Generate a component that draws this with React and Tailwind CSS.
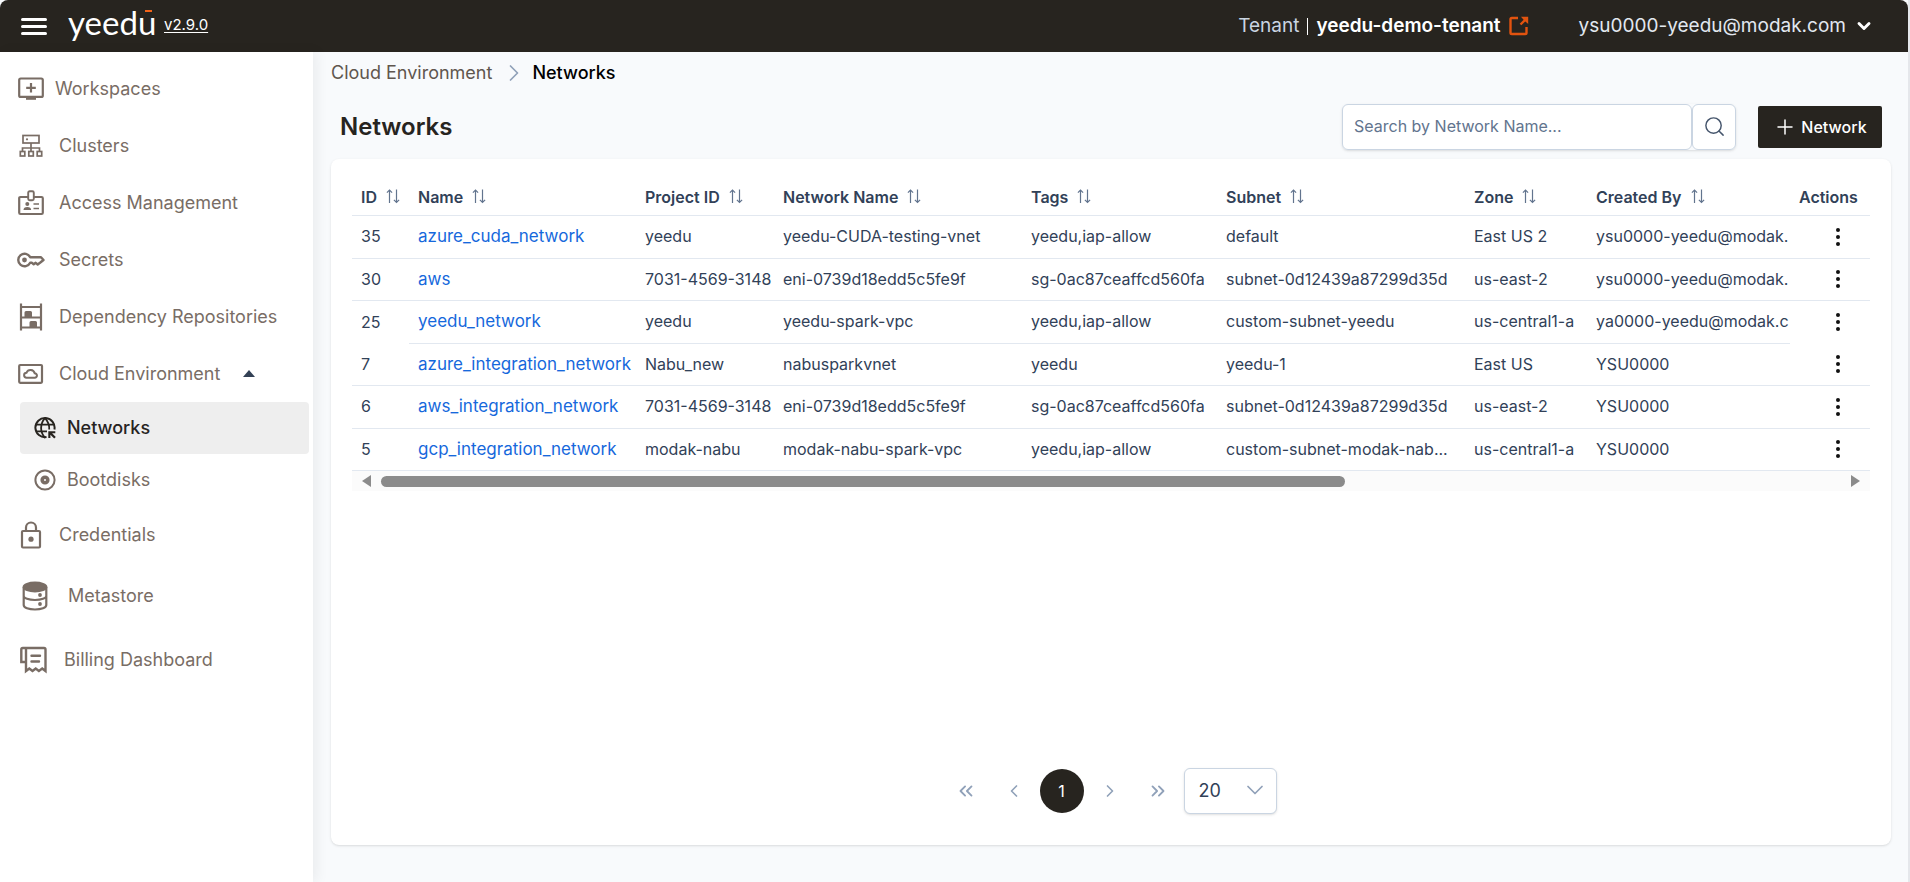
import React from 'react';
import clsx from 'clsx';
import {
  ChevronDown,
  ChevronLeft,
  ChevronRight,
  ChevronsLeft,
  ChevronsRight,
  Plus,
  Search,
} from 'lucide-react';

const WorkspacesIcon = () => (
  <svg width="26" height="24" viewBox="0 0 26 24" fill="none" stroke="currentColor" strokeWidth="2.200">
    <rect x="1.200" y="1.500" width="23.600" height="18.400" rx="1.500" />
    <path d="M13 6v9.500M8.200 10.800h9.600" />
    <path d="M8 20h10v2.800H8z" fill="currentColor" stroke="none" />
  </svg>
);

const ClustersIcon = () => (
  <svg width="26" height="24" viewBox="0 0 26 24" fill="none" stroke="currentColor" strokeWidth="1.700">
    <rect x="5" y="1.500" width="16" height="7.500" />
    <path d="M13 9v8M4.500 17.500v-3.500h17v3.500" />
    <rect x="2.300" y="17.500" width="4.500" height="4.500" />
    <rect x="10.800" y="17.500" width="4.500" height="4.500" />
    <rect x="19.200" y="17.500" width="4.500" height="4.500" />
    <circle cx="9" cy="5.300" r="1.100" fill="currentColor" stroke="none" />
  </svg>
);

const AccessIcon = () => (
  <svg width="26" height="26" viewBox="0 0 26 26" fill="none" stroke="currentColor" strokeWidth="2.200">
    <path d="M10 7H2.500Q1.200 7 1.200 8.300v14.400Q1.200 24 2.500 24h21q1.300 0 1.300-1.300V8.300Q24.800 7 23.500 7H16" />
    <rect x="10.200" y="1.200" width="5.600" height="9" rx="1.500" strokeWidth="1.900" />
    <circle cx="9.300" cy="14" r="2" fill="currentColor" stroke="none" />
    <path d="M5.500 20q0-3 3.800-3t3.800 3z" fill="currentColor" stroke="none" />
    <path d="M15.500 14h5.500M15.500 18.500h5.500" strokeWidth="1.700" />
  </svg>
);

const SecretsIcon = () => (
  <svg width="28" height="16" viewBox="0 0 28 16" fill="none" stroke="currentColor" strokeWidth="2.400">
    <path d="M13.200 5.200A6.300 6.300 0 1 0 13.200 10.800H15l1.700 1.500 2-1.500 2 1.700 2.300-1.700L26.500 8l-2.500-2.800z" strokeLinejoin="round" />
    <circle cx="7.500" cy="8" r="2.400" fill="currentColor" stroke="none" />
  </svg>
);

const ShelvesIcon = () => (
  <svg width="26" height="28" viewBox="0 0 26 28" fill="none" stroke="currentColor" strokeWidth="2.200">
    <path d="M3 .500v27M23 .500v27M3 4h20M3 14.500h20M3 24.500h20" />
    <path d="M6.500 14.500V9.500q0-1.500 1.500-1.500h4.500q1.500 0 1.500 1.500v5zM11.500 24.500v-5q0-1.500 1.500-1.500h4.500q1.500 0 1.500 1.500v5z" fill="currentColor" stroke="none" />
  </svg>
);

const CloudEnvIcon = () => (
  <svg width="26" height="22" viewBox="0 0 26 22" fill="none" stroke="currentColor" strokeWidth="2.200">
    <rect x="1.200" y="2" width="22.800" height="17.800" rx="1" />
    <path d="M8.700 14.700a2.500 2.500 0 0 1-.2-5 4.300 4.300 0 0 1 8.200.6 2.200 2.200 0 0 1 .1 4.400z" strokeWidth="2" />
  </svg>
);

const NetworksIcon = () => (
  <svg width="22" height="22" viewBox="0 0 22 22" fill="none" stroke="currentColor" strokeWidth="2">
    <path d="M12.500 20.100A9.600 9.600 0 1 1 20.400 12.500" />
    <path d="M11 1.200C5.800 7 5.800 15 11 20.800M11 1.200c3.300 3.600 4.500 7.500 4.200 11.300M2 7.600h18M2 14.400h11" strokeWidth="1.800" />
    <path d="M14.300 14.300h7v2h-3.200l3.700 3.700-1.600 1.600-3.800-3.800V21h-2.100z" fill="currentColor" stroke="none" />
  </svg>
);

const BootdisksIcon = () => (
  <svg width="22" height="22" viewBox="0 0 22 22" fill="none" stroke="currentColor">
    <circle cx="11" cy="11" r="9.600" strokeWidth="2" />
    <circle cx="11" cy="11" r="2.800" strokeWidth="3.600" />
  </svg>
);

const CredentialsIcon = () => (
  <svg width="26" height="28" viewBox="0 0 26 28" fill="none" stroke="currentColor" strokeWidth="2.200">
    <rect x="4" y="10" width="18" height="16.500" rx="1" />
    <path d="M8 10V6.500a5 5 0 0 1 10 0V10" />
    <circle cx="13" cy="18.200" r="2.600" fill="currentColor" stroke="none" />
  </svg>
);

const MetastoreIcon = () => (
  <svg width="26" height="30" viewBox="0 0 26 30" fill="none" stroke="currentColor" strokeWidth="2.200">
    <ellipse cx="13" cy="6" rx="11.300" ry="4.300" fill="currentColor" />
    <path d="M1.700 6v18c0 2.700 5 4.500 11.300 4.500s11.300-1.800 11.300-4.500V6M1.700 15c0 2.200 5 4 11.300 4s11.300-1.800 11.300-4" />
    <circle cx="18" cy="14" r="1.900" fill="currentColor" stroke="none" />
    <circle cx="18" cy="23" r="1.900" fill="currentColor" stroke="none" />
  </svg>
);

const BillingIcon = () => (
  <svg width="27" height="28" viewBox="0 0 27 28" fill="none" stroke="currentColor" strokeWidth="2.400">
    <path d="M6 16H1.300V3.500Q1.300 2 2.800 2H24q1.500 0 1.500 1.500V25l-3.300-2.500-3.300 2.500-3.200-2.500-3.200 2.500-3.200-2.500L6 25V2" />
    <path d="M11.500 9.800h8.500M11.500 15.500h7.500" strokeLinecap="round" />
  </svg>
);

const SortIcon = () => (
  <svg width="14" height="16" viewBox="0 0 14 16" fill="none" stroke="currentColor" strokeWidth="1.200" className="text-slate-500">
    <path d="M3.500 14V1M.9 3.600l2.600-2.600 2.600 2.600M10.500.500v13M7.900 10.900l2.600 2.600 2.600-2.600" />
  </svg>
);

const DotsIcon = () => (
  <svg width="6" height="20" viewBox="0 0 6 20" fill="#111">
    <circle cx="3" cy="3" r="2" />
    <circle cx="3" cy="10" r="2" />
    <circle cx="3" cy="17" r="2" />
  </svg>
);

const navItems = [
  { label: 'Workspaces', icon: WorkspacesIcon, row: 'h-[57px] pl-[18px] gap-[11px]' },
  { label: 'Clusters', icon: ClustersIcon, row: 'h-[57px] pl-[18px] gap-[15px]' },
  { label: 'Access Management', icon: AccessIcon, row: 'h-[57px] pl-[18px] gap-[15px]' },
  { label: 'Secrets', icon: SecretsIcon, row: 'h-[57px] pl-[17px] gap-[14px]' },
  { label: 'Dependency Repositories', icon: ShelvesIcon, row: 'h-[57px] pl-[18px] gap-[15px]' },
  { label: 'Cloud Environment', icon: CloudEnvIcon, row: 'h-[57px] pl-[18px] gap-[15px]', open: true },
  { label: 'Networks', icon: NetworksIcon, row: 'h-[52px] ml-5 mr-1 pl-[14px] gap-[11px] rounded', active: true },
  { label: 'Bootdisks', icon: BootdisksIcon, row: 'h-[52px] ml-5 mr-1 pl-[14px] gap-[11px]' },
  { label: 'Credentials', icon: CredentialsIcon, row: 'h-[57px] pl-[18px] gap-[15px]' },
  { label: 'Metastore', icon: MetastoreIcon, row: 'h-[66px] pl-[22px] gap-5' },
  { label: 'Billing Dashboard', icon: BillingIcon, row: 'h-[62px] pl-5 gap-[17px]' },
];

const columns = [
  { key: 'id', label: 'ID', width: 'w-[57px]' },
  { key: 'name', label: 'Name', width: 'w-[227px]' },
  { key: 'project', label: 'Project ID', width: 'w-[138px]' },
  { key: 'network', label: 'Network Name', width: 'w-[248px]' },
  { key: 'tags', label: 'Tags', width: 'w-[195px]' },
  { key: 'subnet', label: 'Subnet', width: 'w-[248px]' },
  { key: 'zone', label: 'Zone', width: 'w-[122px]' },
  { key: 'createdBy', label: 'Created By', width: '' },
];

const networks = [
  { id: 35, name: 'azure_cuda_network', project: 'yeedu', network: 'yeedu-CUDA-testing-vnet', tags: 'yeedu,iap-allow', subnet: 'default', zone: 'East US 2', createdBy: 'ysu0000-yeedu@modak.' },
  { id: 30, name: 'aws', project: '7031-4569-3148', network: 'eni-0739d18edd5c5fe9f', tags: 'sg-0ac87ceaffcd560fa', subnet: 'subnet-0d12439a87299d35d', zone: 'us-east-2', createdBy: 'ysu0000-yeedu@modak.' },
  { id: 25, name: 'yeedu_network', project: 'yeedu', network: 'yeedu-spark-vpc', tags: 'yeedu,iap-allow', subnet: 'custom-subnet-yeedu', zone: 'us-central1-a', createdBy: 'ya0000-yeedu@modak.c', openEnds: true },
  { id: 7, name: 'azure_integration_network', project: 'Nabu_new', network: 'nabusparkvnet', tags: 'yeedu', subnet: 'yeedu-1', zone: 'East US', createdBy: 'YSU0000' },
  { id: 6, name: 'aws_integration_network', project: '7031-4569-3148', network: 'eni-0739d18edd5c5fe9f', tags: 'sg-0ac87ceaffcd560fa', subnet: 'subnet-0d12439a87299d35d', zone: 'us-east-2', createdBy: 'YSU0000' },
  { id: 5, name: 'gcp_integration_network', project: 'modak-nabu', network: 'modak-nabu-spark-vpc', tags: 'yeedu,iap-allow', subnet: 'custom-subnet-modak-nab...', zone: 'us-central1-a', createdBy: 'YSU0000' },
];

const Header = () => (
  <header className="flex h-[52px] shrink-0 items-center rounded-t-lg bg-[#27241f] pr-[34px] pl-[21px] text-white">
    <button type="button" aria-label="Toggle menu" className="flex w-[26px] flex-col gap-1">
      <span className="h-[3px] w-full rounded-full bg-white" />
      <span className="h-[3px] w-full rounded-full bg-white" />
      <span className="h-[3px] w-full rounded-full bg-white" />
    </button>
    <a href="#home" className="relative ml-[21px] w-[88px] pb-2 font-['Lato',sans-serif] text-[33px] leading-[40px]">
      yeedu
      <span className="absolute top-2 right-1 h-[2px] w-[7px] bg-[#f26419]" />
    </a>
    <a href="#version" className="ml-2 pb-0.5 text-[15px] underline underline-offset-2">v2.9.0</a>
    <div className="ml-auto flex items-center text-[19px]">
      <span className="text-slate-300">Tenant</span>
      <span className="mx-2 h-[17px] w-px bg-white" />
      <span className="font-semibold">yeedu-demo-tenant</span>
      <a href="#tenant" aria-label="Switch tenant" className="ml-2 text-[#e2530f]">
        <svg width="20" height="20" viewBox="0 0 20 20" fill="none" stroke="currentColor" strokeWidth="2.400">
          <path d="M9 2H2.800Q1.500 2 1.500 3.300v13.400Q1.500 18 2.800 18h13.400q1.300 0 1.300-1.300V11M11.500 8.500L17 3" />
          <path d="M12 .8h7.200V8l-2.600-2.300-2-2z" fill="currentColor" stroke="none" />
        </svg>
      </a>
    </div>
    <button type="button" className="ml-[50px] flex items-center gap-2 text-[19px] text-slate-200">
      ysu0000-yeedu@modak.com
      <ChevronDown size={20} strokeWidth={3.5} className="text-white" />
    </button>
  </header>
);

const Sidebar = () => (
  <nav className="w-[313px] shrink-0 bg-white pt-2 shadow-[4px_0_12px_rgba(0,0,0,0.06)]">
    {navItems.map((item) => {
      const Icon = item.icon;
      return (
        <a
          key={item.label}
          href="#nav"
          className={clsx(
            'flex items-center text-lg whitespace-nowrap',
            item.row,
            item.active ? 'bg-[#eeeeee] font-medium text-[#27241f]' : 'text-[#796d65]'
          )}
        >
          <Icon />
          <span>{item.label}</span>
          {item.open && (
            <svg width="12" height="7" viewBox="0 0 12 7" fill="#334155" className="ml-2">
              <path d="M0 7L6 0l6 7z" />
            </svg>
          )}
        </a>
      );
    })}
  </nav>
);

const NetworkTable = () => (
  <div>
    <table className="w-full table-fixed border-separate border-spacing-0 text-left text-base text-slate-700">
      <thead>
        <tr className="h-[37px]">
          {columns.map((col) => (
            <th key={col.key} className={clsx('border-b border-slate-200 px-[9px] font-semibold whitespace-nowrap', col.width)}>
              <button type="button" className="flex items-center gap-[9px]">
                {col.label}
                <SortIcon />
              </button>
            </th>
          ))}
          <th className="w-20 border-b border-slate-200 px-[9px] font-semibold">Actions</th>
        </tr>
      </thead>
      <tbody>
        {networks.map((row) => (
          <tr key={row.id} className="odd:h-[43px] even:h-[42px]">
            {columns.map((col) => (
              <td
                key={col.key}
                className={clsx(
                  'pb-0.5 pl-[9px] whitespace-nowrap',
                  !(row.openEnds && col.key === 'id') && 'border-b border-slate-200'
                )}
              >
                {col.key === 'name' ? (
                  <a href="#network" className="block text-[17px] leading-6 text-[#1668dc]">{row.name}</a>
                ) : (
                  row[col.key]
                )}
              </td>
            ))}
            <td className={clsx('pb-1 pl-4 text-center', !row.openEnds && 'border-b border-slate-200')}>
              <button type="button" aria-label={`Actions for ${row.name}`} className="align-middle">
                <DotsIcon />
              </button>
            </td>
          </tr>
        ))}
      </tbody>
    </table>
    <div className="flex h-5 items-center justify-between bg-[#fbfbfb] px-[10px] text-[#8b8b8b]">
      <svg width="9" height="12" viewBox="0 0 9 12" fill="currentColor">
        <path d="M9 0v12L0 6z" />
      </svg>
      <div className="mx-[10px] flex-1">
        <div className="h-[11px] w-[66%] rounded-full bg-[#8b8b8b]" />
      </div>
      <svg width="9" height="12" viewBox="0 0 9 12" fill="currentColor">
        <path d="M0 0v12l9-6z" />
      </svg>
    </div>
  </div>
);

const Pagination = () => (
  <div className="mt-auto flex items-center justify-center gap-1 pr-0.5 text-slate-400">
    <button type="button" aria-label="First page" className="flex size-11 items-center justify-center"><ChevronsLeft size={22} /></button>
    <button type="button" aria-label="Previous page" className="flex size-11 items-center justify-center"><ChevronLeft size={20} /></button>
    <button type="button" className="size-11 rounded-full bg-[#27241f] text-base text-white">1</button>
    <button type="button" aria-label="Next page" className="flex size-11 items-center justify-center"><ChevronRight size={20} /></button>
    <button type="button" aria-label="Last page" className="flex size-11 items-center justify-center"><ChevronsRight size={22} /></button>
    <div className="relative">
      <select
        aria-label="Rows per page"
        className="h-[46px] w-[93px] appearance-none rounded-md border border-slate-300 bg-white pl-[14px] text-lg text-slate-700 shadow-sm"
      >
        <option>20</option>
        <option>50</option>
      </select>
      <ChevronDown size={28} strokeWidth={1.5} className="pointer-events-none absolute top-2 right-2" />
    </div>
  </div>
);

const App = () => {
  return (
    <div className="flex min-h-screen flex-col border-r-2 border-gray-200 bg-slate-50 font-['Inter',sans-serif]">
      <Header />
      <div className="flex flex-1">
        <Sidebar />
        <main className="flex min-w-0 flex-1 flex-col pr-[17px] pb-[37px] pl-[18px]">
          <div className="flex h-[42px] items-center text-lg">
            <a href="#cloud" className="text-[#5f564e]">Cloud Environment</a>
            <ChevronRight size={28} strokeWidth={1.5} className="mr-1 ml-2 text-slate-400" />
            <span className="font-medium text-black">Networks</span>
          </div>

          <div className="flex h-[65px] items-center px-[9px]">
            <h1 className="text-2xl font-semibold text-[#27241f]">Networks</h1>
            <div className="ml-auto flex rounded-md shadow-sm">
              <input
                type="text"
                aria-label="Search by network name"
                placeholder="Search by Network Name..."
                className="h-[46px] w-[350px] rounded-md border border-slate-300 bg-white px-[11px] pb-0.5 text-base placeholder:text-slate-500"
              />
              <button type="button" aria-label="Search" className="flex w-11 items-center justify-center rounded-md border border-slate-300 bg-white text-slate-600">
                <Search size={23} strokeWidth={1.5} />
              </button>
            </div>
            <button type="button" className="ml-[22px] flex h-[42px] w-[124px] items-center justify-center gap-1 rounded-xs bg-[#27241f] text-base font-medium text-white">
              <Plus size={24} strokeWidth={1.5} />
              Network
            </button>
          </div>

          <section className="flex flex-1 flex-col rounded-lg bg-white px-[21px] pt-5 pb-[31px] shadow">
            <NetworkTable />
            <Pagination />
          </section>
        </main>
      </div>
    </div>
  );
};

export default App;
